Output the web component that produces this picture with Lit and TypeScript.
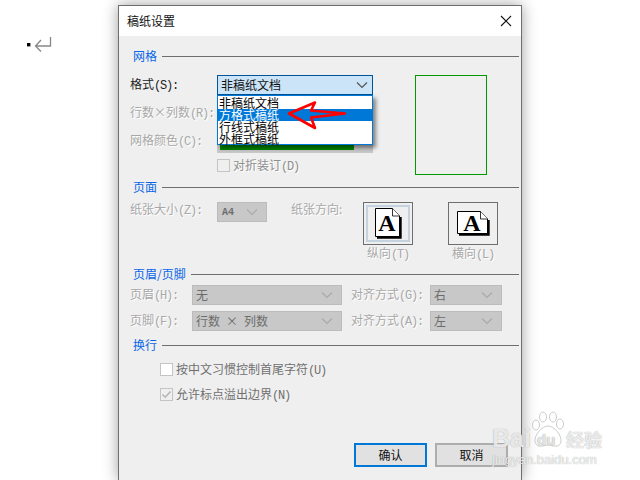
import { LitElement, html, css, svg } from "lit";
import { customElement } from "lit/decorators.js";

const lab = (cn: unknown, lat: string) => html`${cn}<span class="lat">${lat}</span>`;
const chevron = html`<svg class="chev" width="12" height="8" viewBox="0 0 12 8"><path d="M1 1.5 6 6.5 11 1.5" fill="none" stroke="currentColor" stroke-width="1.2"/></svg>`;
const field = (content: unknown, cls = "") => html`<div class="field ${cls}"><span class="val">${content}</span>${chevron}</div>`;

const page = (w: number, h: number) => svg`
  <svg width=${w + 2} height=${h + 2} viewBox="0 0 ${w + 2} ${h + 2}">
    <path d="M${w + .5} 9V${h + .5}H2" fill="none" stroke="#000" stroke-width="2.4"/>
    <path d="M.5.5H${w - 7.5}L${w - .5} 8V${h - .5}H.5Z" fill="#fff" stroke="#000"/>
    <path d="M${w - 7.5} .5V8H${w - .5}" fill="#fff" stroke="#000" stroke-width=".8"/>
    <text x=${(w - 1) / 2} y=${h / 2 + 8} text-anchor="middle" font-family="Liberation Serif" font-weight="700" font-size="24" fill="#000">A</text>
  </svg>`;

@customElement("app-root")
export class AppRoot extends LitElement {
  static styles = css`
    :host { display: block; position: relative; width: 640px; height: 480px; overflow: hidden; background: #fff;
      font: 12px/14px "Noto Sans CJK SC", sans-serif; color: #000; }
    * { box-sizing: border-box; }
    .mark { position: absolute; left: 27px; top: 36px; }
    .dialog { position: absolute; left: 118px; top: 5px; width: 404px; height: 475px; background: #efefef;
      border: solid #6e6e6e; border-width: 1px 1px 0 1px; box-shadow: 0 0 14px rgba(0,0,0,.38); }
    .title { height: 30px; background: #fff; display: flex; align-items: center; justify-content: space-between;
      padding: 0 9px 0 8px; color: #111; }
    .body { padding-top: 13px; }
    .sec { display: flex; align-items: center; gap: 5px; height: 14px; padding: 0 2px 0 14px; color: #0a66e8; }
    .sec i { flex: 1; height: 1px; margin-top: 1px; background: #6e6e6e; }
    .lat { font: 12px/1 "Liberation Mono", monospace; letter-spacing: -1.2px; }
    .x { display: inline-block; width: 12px; text-align: center; }
    .x2 { display: inline-block; width: 24px; text-align: center; }
    .dis { color: #a8a8a8; text-shadow: 1px 1px 0 #fff; white-space: nowrap; }
    .blk { color: #222; white-space: nowrap; }

    .g1 { display: grid; grid-template-columns: 87px 156px 42px 72px; grid-template-rows: 27px 31px 26px 16px;
      margin: 12px 0 5px 11px; align-items: start; }
    .l1 { line-height: 18px; }
    .preview { grid-column: 4; grid-row: 1 / 5; height: 100px; border: 1px solid #009a00; }
    .combo-wrap { position: relative; height: 20px; }
    .combo { height: 20px; background: #cce4f7; border: 1px solid #005499; display: flex; align-items: center;
      justify-content: space-between; padding: 0 4px 0 3px; color: #111; }
    .chev { color: #555; flex: none; }
    .list { position: absolute; left: 0; top: 20px; width: 156px; height: 50px; background: #fff; border: 1px solid #0078d7;
      box-shadow: 3px 3px 4px rgba(0,0,0,.45); z-index: 2; padding-top: 1px; }
    .list div { height: 12px; line-height: 12px; padding-left: 1px; color: #000; }
    .list .sel { background: #0078d7; color: #fff; }
    .colorf { height: 20px; background: #c8c8c8; padding: 0 19px 3px 3px; }
    .colorf div { height: 17px; background: #008a00; }
    .chk { display: flex; align-items: center; gap: 3px; height: 13px; }
    .box { width: 13px; height: 13px; border: 1px solid #c4c4c4; background: #fff; flex: none; display: block; }
    .box.f { background: #efefef; }

    .g2 { display: grid; grid-template-columns: 87px 50px 24px 72px 50px 35px 50px; height: 65px; margin: 8px 0 0 11px; align-items: start; }
    .field { height: 20px; background: #c8c8c8; border: 1px solid #bcbcbc; display: flex; align-items: center;
      justify-content: space-between; padding: 0 8px 0 3px; color: #6c6c6c; }
    .field .chev { color: #aaa; }
    .field.a .val { font: 10px "Liberation Mono", monospace; font-weight: 700; padding-left: 1px; }
    .orient { display: flex; flex-direction: column; align-items: center; gap: 1px; }
    .obox { width: 50px; height: 43px; border: 1px solid #6e6e6e; display: flex; align-items: center; justify-content: center; }
    .obox.on { box-shadow: inset 0 0 0 2px #efefef, inset 0 0 0 4px #c5d3e0; }
    .obox svg { display: block; }

    .g3 { display: grid; grid-template-columns: 62px 150px 9px 79px 72px; grid-template-rows: 20px 20px; row-gap: 6px; margin: 4px 0 0 11px; align-items: start; }
    .g3 .dis { line-height: 18px; }
    .sec.s4 { margin-top: 7px; }
    .wrap { display: flex; flex-direction: column; gap: 12px; margin: 11px 0 0 41px; }
    .wrap .t { color: #6f6f6f; white-space: nowrap; }
    .btns { display: flex; justify-content: flex-end; gap: 8px; margin: 42px 13px 0 0; }
    .btn { width: 73px; height: 24px; background: #e1e1e1; border: 2px solid #adadad; display: flex; align-items: center; justify-content: center; color: #111; }
    .btn.p { border-color: #0078d7; }

    .arrow { position: absolute; left: 0; top: 0; z-index: 3; pointer-events: none; }
    .wm { position: absolute; left: 490px; top: 410px; width: 120px; height: 58px; z-index: 4; color: rgba(255,255,255,.8);
      text-shadow: 0 0 1px rgba(110,110,110,.7); font-family: "Liberation Sans", sans-serif; pointer-events: none; }
    .wm span { position: absolute; white-space: nowrap; }
    .wm .bai { left: 2px; top: 14px; font-size: 25px; line-height: 28px; font-weight: 700; }
    .wm .du { left: 47px; top: 22px; font-size: 15px; line-height: 16px; font-weight: 700; text-shadow: 0 0 1px rgba(90,90,90,.8); }
    .wm .jy { left: 76px; top: 19px; font: 700 18px/20px "Noto Sans CJK SC", sans-serif; }
    .wm .url { left: 2px; top: 43px; font-size: 13px; line-height: 14px; }
    .wm svg { position: absolute; left: 41px; top: 1px; opacity: .75; }
  `;

  render() {
    return html`
      <svg class="mark" width="26" height="18" viewBox="0 0 26 18">
        <rect x="0" y="7" width="3.4" height="3.4" fill="#000"/>
        <path d="M23.5 1V10H8.5M14 4 8.5 10 14 15.5" fill="none" stroke="#888" stroke-width="1.3"/>
      </svg>

      <div class="dialog">
        <div class="title">
          <span>稿纸设置</span>
          <svg width="12" height="12" viewBox="0 0 12 12"><path d="M1 1 11 11M11 1 1 11" stroke="#111" stroke-width="1.1"/></svg>
        </div>
        <div class="body">
          <div class="sec"><span>网格</span><i></i></div>
          <div class="g1">
            <div class="l1 blk">${lab("格式", "(S):")}</div>
            <div class="combo-wrap">
              <div class="combo"><span>非稿纸文档</span>${chevron}</div>
              <div class="list">
                <div>非稿纸文档</div>
                <div class="sel">方格式稿纸</div>
                <div>行线式稿纸</div>
                <div>外框式稿纸</div>
              </div>
            </div>
            <div></div>
            <div class="preview"></div>
            <div class="dis" style="grid-row:2;grid-column:1;margin-top:3px">${lab(html`行数<span class="x">×</span>列数`, "(R):")}</div>
            <div class="dis" style="grid-row:3;grid-column:1">${lab("网格颜色", "(C):")}</div>
            <div class="colorf" style="grid-row:3;grid-column:2"><div></div></div>
            <div class="chk" style="grid-row:4;grid-column:2">
              <span class="box f"></span><span class="dis" style="color:#8e8e8e">${lab("对折装订", "(D)")}</span>
            </div>
          </div>

          <div class="sec"><span>页面</span><i></i></div>
          <div class="g2">
            <div class="dis">${lab("纸张大小", "(Z):")}</div>
            ${field("A4", "a")}
            <div></div>
            <div class="dis">纸张方向:</div>
            <div class="orient">
              <div class="obox on">${page(25, 29)}</div>
              <span class="dis">${lab("纵向", "(T)")}</span>
            </div>
            <div></div>
            <div class="orient">
              <div class="obox">${page(31, 23)}</div>
              <span class="dis">${lab("横向", "(L)")}</span>
            </div>
          </div>

          <div class="sec"><span>页眉/页脚</span><i></i></div>
          <div class="g3">
            <div class="dis">${lab("页眉", "(H):")}</div>
            ${field("无")}
            <div></div>
            <div class="dis">${lab("对齐方式", "(G):")}</div>
            ${field("右")}
            <div class="dis">${lab("页脚", "(F):")}</div>
            ${field(html`行数<span class="x2">×</span>列数`)}
            <div></div>
            <div class="dis">${lab("对齐方式", "(A):")}</div>
            ${field("左")}
          </div>

          <div class="sec s4"><span>换行</span><i></i></div>
          <div class="wrap">
            <div class="chk"><span class="box"></span><span class="t">${lab("按中文习惯控制首尾字符", "(U)")}</span></div>
            <div class="chk">
              <svg class="box f" viewBox="0 0 11 11"><path d="M1.5 5.5 4.2 8.2 9.5 2.5" fill="none" stroke="#b4b4b4" stroke-width="1.5"/></svg>
              <span class="t">${lab("允许标点溢出边界", "(N)")}</span>
            </div>
          </div>
          <div class="btns">
            <div class="btn p">确认</div>
            <div class="btn">取消</div>
          </div>
        </div>
      </div>

      <svg class="arrow" width="640" height="480" viewBox="0 0 640 480">
        <path d="M289 113.5 315 102.5 311 110.5 345 113.5 311 117.5 315 128Z" fill="none" stroke="#f00" stroke-width="2.6" stroke-linejoin="round"/>
      </svg>

      <div class="wm">
        <svg width="34" height="38" viewBox="0 0 34 38" fill="#fff" stroke="#aaa" stroke-width=".8">
          <ellipse cx="5" cy="14" rx="3.5" ry="5"/><ellipse cx="12" cy="6" rx="3.5" ry="5"/>
          <ellipse cx="22" cy="6" rx="3.5" ry="5"/><ellipse cx="29" cy="13" rx="3.5" ry="5"/>
          <path d="M17 15C11 15 3 24 4 31 6 38 13 34 17 34 21 34 28 38 30 31 31 24 23 15 17 15Z"/>
        </svg>
        <span class="bai">Bai</span>
        <span class="du">du</span>
        <span class="jy">经验</span>
        <span class="url">jingyan.baidu.com</span>
      </div>
    `;
  }
}
